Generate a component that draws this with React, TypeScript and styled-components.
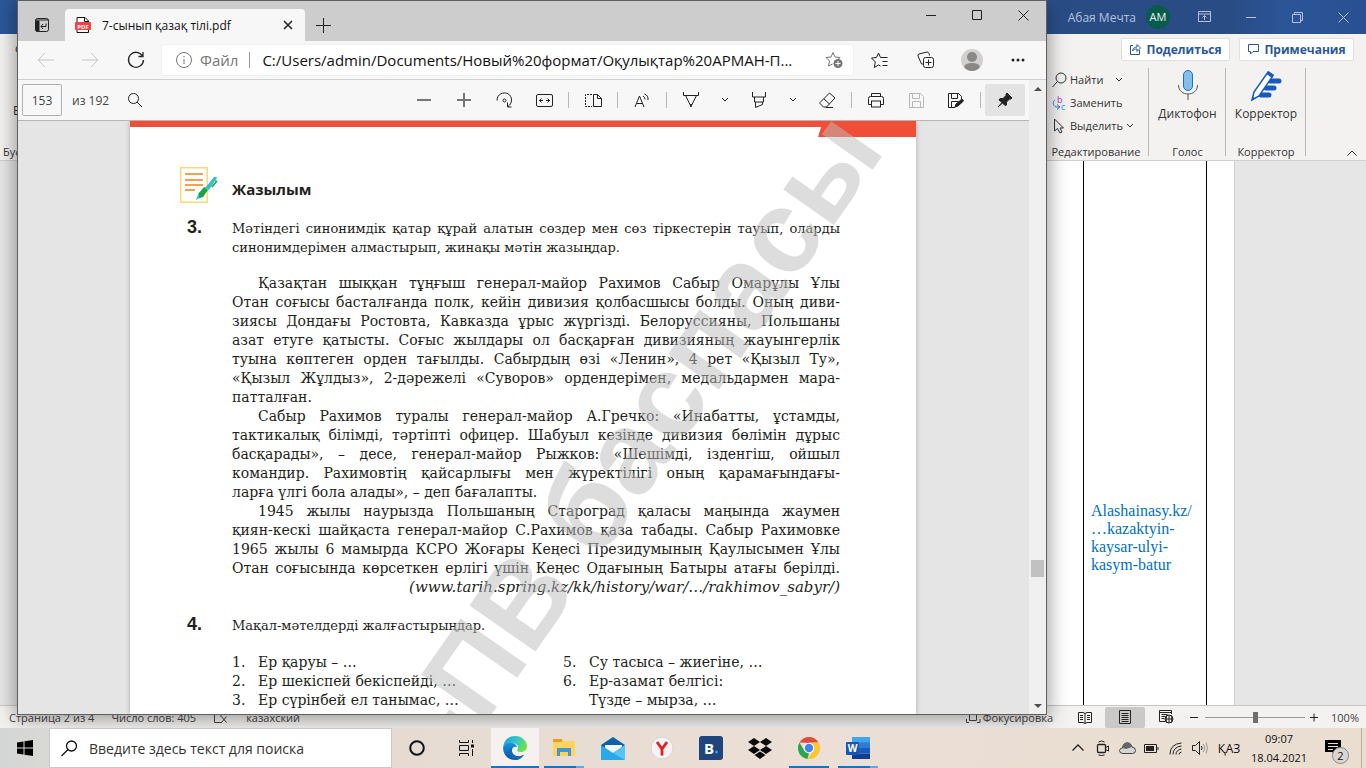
import React from 'react';
import styled, { createGlobalStyle } from 'styled-components';

const ui = '"Open Sans", "Noto Sans", sans-serif';
const serif = '"Liberation Serif", "Times New Roman", serif';
const book = '"DejaVu Serif", serif';

const Global = createGlobalStyle`
  * { box-sizing: border-box; }
  body { margin: 0; font-family: ${ui}; font-size: 12px; color: #333; overflow: hidden; }
  button, input { font: inherit; color: inherit; margin: 0; padding: 0; border: 0; background: none; outline: 0; }
  p, h2, ol { margin: 0; padding: 0; }
  svg { display: block; flex: none; }
`;

const Desktop = styled.div`
  position: relative;
  display: flex;
  flex-direction: column;
  height: 100vh;
  overflow: hidden;
`;

/* ---------- shared ---------- */

const Spacer = styled.div`
  flex: 1;
`;

const IconButton = styled.button<{ $w?: number; $h?: number; $bg?: string; $c?: string }>`
  display: flex;
  flex: none;
  align-items: center;
  justify-content: center;
  width: ${p => p.$w ?? 46}px;
  height: ${p => p.$h ?? 32}px;
  background: ${p => p.$bg ?? 'transparent'};
  color: ${p => p.$c ?? '#222'};
  border-radius: 2px;
`;

type IconProps = { size?: number; w?: number; h?: number; sw?: number; fill?: string; children: React.ReactNode };
const Icon = ({ size = 16, w, h, sw = 1, fill = 'none', children }: IconProps) => (
  <svg width={w ?? size} height={h ?? size} viewBox={`0 0 ${w ?? size} ${h ?? size}`} fill={fill} stroke="currentColor" strokeWidth={sw} aria-hidden="true">
    {children}
  </svg>
);

const Chevron = () => <Icon w={8} h={6}><path d="M1 1l3 3 3-3" /></Icon>;

/* ---------- word window ---------- */

const WordWindow = styled.section`
  display: flex;
  flex: 1;
  flex-direction: column;
  min-height: 0;
`;

const WordTitle = styled.header`
  display: flex;
  flex: none;
  align-items: center;
  justify-content: flex-end;
  height: 34px;
  color: #b4c2dc;
  background: linear-gradient(90deg, #2b579a 0, #2b579a 76%, #294c84 78%, #294c84 90%, #2b5597 94%, #2a5093 100%);
`;

const UserName = styled.span`
  margin-right: 10px;
`;

const Avatar = styled.span`
  width: 24px;
  margin-right: 12px;
  border-radius: 50%;
  background: #085c4c;
  color: #e8f2ef;
  font-size: 11px;
  line-height: 24px;
  text-align: center;
`;

const Ribbon = styled.div`
  display: flex;
  flex: none;
  flex-direction: column;
  height: 127px;
  background: #f3f2f1;
  border-bottom: 1px solid #d2d0ce;
`;

const TabRow = styled.div`
  display: flex;
  flex: none;
  gap: 9px;
  align-items: center;
  height: 30px;
  padding: 0 12px 0 15px;
`;

const ShareButton = styled.button<{ $w: number }>`
  display: flex;
  gap: 4px;
  align-items: center;
  justify-content: center;
  width: ${p => p.$w}px;
  height: 23px;
  background: #fff;
  border: 1px solid #e1dfdd;
  border-radius: 2px;
  color: #2b579a;
  font-weight: 700;
  white-space: nowrap;
`;

const Groups = styled.div`
  display: flex;
  flex: 1;
  padding-top: 4px;
`;

const Group = styled.div<{ $w: number; $pad?: number }>`
  display: flex;
  flex-direction: column;
  align-items: center;
  width: ${p => p.$w}px;
  padding-right: ${p => p.$pad ?? 0}px;
  background: linear-gradient(#b9b7b5, #b9b7b5) right top / 1px 88px no-repeat;
  white-space: nowrap;
`;

const GroupLabel = styled.span`
  margin-top: auto;
  line-height: 16px;
  font-size: 11px;
`;

const CommandList = styled.div`
  display: flex;
  flex-direction: column;
  align-self: flex-start;
  padding-left: 1px;
  font-size: 11px;
`;

const Command = styled.button`
  display: flex;
  gap: 3px;
  align-items: center;
  height: 23px;
`;

const BigCommand = styled.button`
  display: flex;
  flex-direction: column;
  align-items: center;
  gap: 2px;
  line-height: 16px;
`;

const Clipped = styled.div`
  display: flex;
  flex-direction: column;
  justify-content: space-between;
  padding: 34px 0 0 3px;
  line-height: 18px;

  button { padding-left: 10px; text-align: left; }
`;

const Collapse = styled.button`
  align-self: flex-end;
  width: 20px;
  height: 14px;
  margin: 0 4px 0 36px;
  padding-left: 4px;
`;

const Workspace = styled.main`
  display: flex;
  flex: 1;
  min-height: 0;
  justify-content: flex-end;
  padding-right: 131px;
  background: #e6e6e6;
  border-bottom: 1px solid #c8c6c4;
`;

const Sheet = styled.div`
  display: flex;
  width: 794px;
  justify-content: flex-end;
  padding-right: 27px;
  background: #fff;
  border-right: 1px solid #d0cecc;
`;

const Cell = styled.div`
  width: 124px;
  padding: 341px 7px 0;
  border: solid #000;
  border-width: 0 1px;
  color: #0070c0;
  font: 16px/18px ${serif};
  white-space: nowrap;
`;

const StatusBar = styled.footer`
  display: flex;
  flex: none;
  align-items: center;
  height: 22px;
  padding: 0 7px 0 9px;
  background: #f3f2f1;
  color: #444;
  font-size: 11px;
  white-space: nowrap;
`;

const StatusItem = styled.span<{ $gap?: number; $before?: number }>`
  margin-left: ${p => p.$before ?? 0}px;
  margin-right: ${p => p.$gap ?? 17}px;
`;

const Zoom = styled.input`
  appearance: none;
  width: 100px;
  height: 14px;
  margin: 0 4px;
  background: linear-gradient(#999, #999) center / 100% 1px no-repeat;

  &::-webkit-slider-thumb {
    appearance: none;
    width: 5px;
    height: 11px;
    background: #6e6e6e;
  }
`;

const ribbonDisplay = <Icon w={14} h={12}><path d="M.5.5h12v10H.5zM.5 3h12M6.5 9V5M4.500 6.500l2-2 2 2" /></Icon>;
const minimize = <Icon w={11} h={11}><path d="M0 5.500h10" /></Icon>;
const closeIcon = <Icon w={11} h={11}><path d="M.5.5l10 10M10.500.5l-10 10" /></Icon>;

const Word = () => (
  <WordWindow>
    <WordTitle>
      <UserName>Абая Мечта</UserName>
      <Avatar>АМ</Avatar>
      <IconButton $c="#b4c2dc" aria-label="Лента">{ribbonDisplay}</IconButton>
      <IconButton $c="#b4c2dc" aria-label="Свернуть">{minimize}</IconButton>
      <IconButton $c="#b4c2dc" aria-label="Восстановить">
        <Icon w={11} h={11}><path d="M.5 2.500h8v8h-8zM2.500 2.500v-2h8v8h-2" /></Icon>
      </IconButton>
      <IconButton $c="#b4c2dc" aria-label="Закрыть">{closeIcon}</IconButton>
    </WordTitle>
    <Ribbon>
      <TabRow>
        <button>Файл</button>
        <Spacer />
        <ShareButton $w={109}>
          <Icon w={13} h={12}><path d="M4 2.500H1.500v9h9V7M3.500 8C4 5.500 5.500 4 8 4V1.500L11.500 5 8 8.500V6C6 6 4.500 6.500 3.500 8z" /></Icon>
          Поделиться
        </ShareButton>
        <ShareButton $w={115}>
          <Icon w={13} h={12}><path d="M1.500 1.500h10v7H6l-2.500 2.500V8.500h-2z" /></Icon>
          Примечания
        </ShareButton>
      </TabRow>
      <Groups>
        <Clipped>
          <button>Вставить</button>
          <GroupLabel>Буфер обмена</GroupLabel>
        </Clipped>
        <Spacer />
        <Group $w={98} $pad={8}>
          <CommandList>
            <Command>
              <Icon w={15} h={16}><circle cx="9" cy="6" r="5" /><path d="M5 10l-4.500 5" /></Icon>
              Найти <Icon w={20} h={6}><path d="M10 1l3 3 3-3" /></Icon>
            </Command>
            <Command>
              <svg width="15" height="20" viewBox="0 0 15 20" fill="none">
                <path d="M3 7C.5 8.500.5 12.500 4 14h3M5 11.500l3 2.500-3 2.500" stroke="#2b7cc4" />
                <text x="5" y="10" fontSize="9" fill="#a33ea8">b</text>
                <text x="9" y="17" fontSize="9" fill="#2b9bd4">c</text>
              </svg>
              Заменить
            </Command>
            <Command>
              <Icon w={15} h={16}><path d="M2.500 1v12l3-2.500L8 15l2-1-2-4h3.500z" /></Icon>
              Выделить <Chevron />
            </Command>
          </CommandList>
          <GroupLabel>Редактирование</GroupLabel>
        </Group>
        <Group $w={77}>
          <BigCommand>
            <svg width="32" height="36" viewBox="0 0 32 36" fill="none">
              <rect x="11.500" y="2.500" width="9" height="20" rx="4.500" fill="#83beec" stroke="#1e73b8" />
              <path d="M6.500 17c0 12 19 12 19 0M16 26v6" stroke="#555" />
            </svg>
            Диктофон
          </BigCommand>
          <GroupLabel>Голос</GroupLabel>
        </Group>
        <Group $w={80}>
          <BigCommand>
            <svg width="32" height="36" viewBox="0 0 32 36" fill="none">
              <path d="M20 13h9M16 20h8M11 27h8" stroke="#185abd" strokeWidth="5" strokeLinecap="round" />
              <path d="M2 32l2-8L18 4l5 3.500L9 28z" fill="#fff" stroke="#185abd" strokeWidth="1.500" />
              <path d="M16.500 6L18.500 3l5.500 4-2 3zM1.500 32.500l1-4 3 2z" fill="#185abd" />
            </svg>
            Корректор
          </BigCommand>
          <GroupLabel>Корректор</GroupLabel>
        </Group>
        <Collapse aria-label="Свернуть ленту"><Icon w={12} h={8}><path d="M1.500 6.500l4.500-4.500 4.500 4.500" /></Icon></Collapse>
      </Groups>
    </Ribbon>
    <Workspace>
      <Sheet>
        <Cell>Alashainasy.kz/<br />…kazaktyin-<br />kaysar-ulyi-<br />kasym-batur</Cell>
      </Sheet>
    </Workspace>
    <StatusBar>
      <StatusItem>Страница 2 из 4</StatusItem>
      <StatusItem>Число слов: 405</StatusItem>
      <StatusItem><Icon w={16} h={14}><path d="M9 12.500H1.500V1H8v6M8.500 6.500l5 6M13.500 6.500l-5 6" /></Icon></StatusItem>
      <StatusItem>казахский</StatusItem>
      <Spacer />
      <Icon w={15} h={14}><path d="M3.500 1.500h5l2 2v7h-7zM.5 9v3.500H3M14 9v3.500h-3" /></Icon>
      <StatusItem $before={2} $gap={12}>Фокусировка</StatusItem>
      <IconButton $w={40} $h={21} aria-label="Режим чтения">
        <Icon w={14} h={13}><path d="M.5 1.500h4.500l2 1 2-1h4.500v10H9l-2 1-2-1H.5zM7 2.500v10M2 4.500h3M2 6.500h3M2 8.500h3M9 4.500h3M9 6.500h3M9 8.500h3" /></Icon>
      </IconButton>
      <IconButton $w={40} $h={21} $bg="#cbc9c8" aria-label="Разметка страницы">
        <Icon w={12} h={14}><path d="M.5.5h11v13H.5zM2.500 3.500h7M2.500 5.500h7M2.500 7.500h7M2.500 9.500h7M2.500 11.500h7" /></Icon>
      </IconButton>
      <IconButton $w={42} $h={21} aria-label="Веб-документ">
        <Icon w={15} h={14}><path d="M6 11.500H.5V.5h12V4M.5 2.500h12M2.500 4.500h6M2.500 6.500h4M2.500 8.500h3" /><circle cx="10" cy="9" r="4" /><path d="M6 9h8M10 5v8M8 5.500c-1 2-1 5 0 7M12 5.500c1 2 1 5 0 7" /></Icon>
      </IconButton>
      <IconButton $w={14} $h={20} aria-label="Уменьшить"><Icon w={9} h={9}><path d="M0 4.500h8" /></Icon></IconButton>
      <Zoom type="range" aria-label="Масштаб" defaultValue={50} />
      <IconButton $w={10} $h={20} aria-label="Увеличить"><Icon w={9} h={9}><path d="M0 4.500h8M4 .5v8" /></Icon></IconButton>
      <StatusItem $before={12} $gap={0}>100%</StatusItem>
    </StatusBar>
  </WordWindow>
);

/* ---------- browser window ---------- */

const Browser = styled.section`
  position: absolute;
  inset: 0 319px 53px 17px;
  display: flex;
  flex-direction: column;
  overflow: hidden;
  background: #f7f7f7;
  border: 1px solid #5f5f5f;
`;

const BrowserShadow = styled.div`
  position: absolute;
  inset: 0 319px 53px 17px;
  box-shadow: 0 2px 18px 2px rgba(0, 0, 0, 0.38);
`;

const TabStrip = styled.div`
  display: flex;
  flex: none;
  align-items: flex-end;
  height: 40px;
  background: #cdcdcd;
`;

const Tab = styled.div`
  display: flex;
  align-items: center;
  width: 240px;
  height: 32px;
  padding: 0 6px 0 10px;
  background: #f7f7f7;
  border-radius: 4px 4px 0 0;
  color: #111;
  white-space: nowrap;

  span { flex: 1; margin-left: 11px; }
`;

const WindowControls = styled.div`
  display: flex;
  align-self: flex-start;
`;

const AddressRow = styled.div`
  display: flex;
  flex: none;
  align-items: center;
  height: 39px;
  padding: 0 5px;
  border-bottom: 1px solid #cfcfcf;
`;

const Address = styled.div`
  display: flex;
  flex: 1;
  align-items: center;
  height: 30px;
  margin: 0 4px 0 4px;
  padding: 0 9px 0 14px;
  background: #fff;
  border-radius: 3px;
  color: #767676;
  font-size: 15px;
  box-shadow: 0 0 2px #ddd;

  label { padding: 0 11px 0 8px; border-right: 1px solid #999; line-height: 16px; }
  input { flex: 1; min-width: 0; padding-left: 12px; color: #111; }
`;

const ViewerRow = styled.div`
  display: flex;
  flex: 1;
  min-height: 0;
`;

const Viewer = styled.div`
  display: flex;
  flex: 1;
  flex-direction: column;
  min-width: 0;
`;

const PdfToolbar = styled.div`
  display: flex;
  flex: none;
  align-items: center;
  height: 41px;
  padding: 0 4px;
  border-bottom: 1px solid #b5b5b5;
  color: #444;
  white-space: nowrap;
`;

const PageInput = styled.input`
  width: 40px;
  height: 32px;
  margin-right: 10px;
  border: 1px solid #b0b0b0;
  border-radius: 2px;
  text-align: center;
`;

const Divider = styled.span`
  width: 1px;
  height: 16px;
  margin: 0 4px;
  background: #b8b8b8;
`;

const Canvas = styled.div`
  display: flex;
  flex: 1;
  justify-content: center;
  min-height: 0;
  padding-right: 1px;
  overflow: hidden;
  background: #e5e5e5;
`;

const Scrollbar = styled.div`
  display: flex;
  flex-direction: column;
  align-items: center;
  width: 17px;
  padding: 7px 0 6px;
  background: #f0f0f0;
  color: #505050;

  i { width: 13px; height: 17px; margin-bottom: 127px; background: #c1c1c1; }
`;

const Page = styled.article`
  position: relative;
  width: 786px;
  height: max-content;
  min-height: 100%;
  padding: 46px 76px 0 50px;
  overflow: hidden;
  background: linear-gradient(#f04e37, #f04e37) top / 100% 6px no-repeat #fff;
  color: #231f20;
  box-shadow: 0 0 5px rgba(0, 0, 0, 0.25);
`;

const Corner = styled.div`
  position: absolute;
  top: 0;
  right: 0;
  width: 98px;
  height: 16px;
  background: #f04e37;
  clip-path: polygon(5px 0, 100% 0, 100% 100%, 0 100%);
`;

const Watermark = styled.div`
  position: absolute;
  top: -70px;
  right: 29px;
  color: rgba(188, 188, 188, 0.5);
  font: bold 117px/117px "Liberation Sans", Arial, sans-serif;
  white-space: nowrap;
  transform: rotate(-55deg);
  transform-origin: 100% 99px;
  pointer-events: none;
`;

const Heading = styled.div`
  display: flex;
  align-items: flex-end;
  gap: 14px;
  margin-bottom: 16px;

  h2 { font-size: 15px; line-height: 28px; }
`;

const Task = styled.div`
  display: flex;
  margin-bottom: 17px;
  padding-left: 7px;
  font: 13px/19px ${book};

  b { width: 45px; font: bold 18px/16px "Liberation Sans Narrow", "Liberation Sans", sans-serif; }
  p { flex: 1; }
`;

const Line = styled.span<{ $a?: 'justify' | 'left' | 'right'; $indent?: boolean }>`
  display: block;
  padding-left: ${p => (p.$indent ? 26 : 0)}px;
  text-align: justify;
  text-align-last: ${p => p.$a ?? 'justify'};
  white-space: nowrap;
`;

const Story = styled.div`
  margin: 0 0 19px 52px;
  font: 14px/19px ${book};
`;

const Source = styled.p`
  font-size: 15px;
  font-style: italic;
  text-align: right;
`;

const Proverbs = styled.div`
  display: flex;
  padding: 1px 0 0 52px;
  font: 14px/19px ${book};

  ol { flex: none; width: 331px; list-style: none; }
  li { display: flex; }
  li > span:first-child { width: 26px; }
`;

type L = { t: string; a?: 'justify' | 'left' | 'right'; i?: boolean };
const story: L[][] = [
  [
    { t: 'Қазақтан шыққан тұңғыш генерал-майор Рахимов Сабыр Омарұлы Ұлы', i: true },
    { t: 'Отан соғысы басталғанда полк, кейін дивизия қолбасшысы болды. Оның диви-' },
    { t: 'зиясы Дондағы Ростовта, Кавказда ұрыс жүргізді. Белоруссияны, Польшаны' },
    { t: 'азат етуге қатысты. Соғыс жылдары ол басқарған дивизияның жауынгерлік' },
    { t: 'туына көптеген орден тағылды. Сабырдың өзі «Ленин», 4 рет «Қызыл Ту»,' },
    { t: '«Қызыл Жұлдыз», 2-дәрежелі «Суворов» ордендерімен, медальдармен мара-' },
    { t: 'патталған.', a: 'left' },
  ],
  [
    { t: 'Сабыр Рахимов туралы генерал-майор А.Гречко: «Инабатты, ұстамды,', i: true },
    { t: 'тактикалық білімді, тәртіпті офицер. Шабуыл кезінде дивизия бөлімін дұрыс' },
    { t: 'басқарады», – десе, генерал-майор Рыжков: «Шешімді, ізденгіш, ойшыл' },
    { t: 'командир. Рахимовтің қайсарлығы мен жүректілігі оның қарамағындағы-' },
    { t: 'ларға үлгі бола алады», – деп бағалапты.', a: 'left' },
  ],
  [
    { t: '1945 жылы наурызда Польшаның Староград қаласы маңында жаумен', i: true },
    { t: 'қиян-кескі шайқаста генерал-майор С.Рахимов қаза табады. Сабыр Рахимовке' },
    { t: '1965 жылы 6 мамырда КСРО Жоғары Кеңесі Президумының Қаулысымен Ұлы' },
    { t: 'Отан соғысында көрсеткен ерлігі үшін Кеңес Одағының Батыры атағы берілді.' },
  ],
];

const Document = () => (
  <Page>
    <Corner />
    <Heading>
      <svg width="38" height="36" viewBox="0 0 38 36" fill="none">
        <rect x=".75" y=".75" width="26.500" height="34.500" stroke="#ffd871" strokeWidth="1.500" />
        <path d="M5 7h18M5 13h18M5 18h18M5 23h10" stroke="#f4a050" strokeWidth="2" />
        <path d="M16 33l3-8 5 4z" fill="#35bfc9" />
        <path d="M19 26l5-6 4 3-5 7-4 1z" fill="#1fa14b" />
        <path d="M25 21L34 10q2-1 3 1L29 23z" fill="#35bfc9" />
        <path d="M32 20l4.500-5.500-1-1" stroke="#1fa14b" strokeWidth="1.500" />
      </svg>
      <h2>Жазылым</h2>
    </Heading>
    <Task>
      <b>3.</b>
      <p>
        <Line>Мәтіндегі синонимдік қатар құрай алатын сөздер мен сөз тіркестерін тауып, оларды</Line>
        <Line $a="left">синонимдерімен алмастырып, жинақы мәтін жазыңдар.</Line>
      </p>
    </Task>
    <Story>
      {story.map((lines, i) => (
        <p key={i}>
          {lines.map(l => <Line key={l.t} $a={l.a} $indent={l.i}>{l.t}</Line>)}
        </p>
      ))}
      <Source>(www.tarih.spring.kz/kk/history/war/…/rakhimov_sabyr/)</Source>
    </Story>
    <Task>
      <b>4.</b>
      <p>Мақал-мәтелдерді жалғастырыңдар.</p>
    </Task>
    <Proverbs>
      <ol>
        <li><span>1.</span><span>Ер қаруы – …</span></li>
        <li><span>2.</span><span>Ер шекіспей бекіспейді, …</span></li>
        <li><span>3.</span><span>Ер сүрінбей ел танымас, …</span></li>
      </ol>
      <ol>
        <li><span>5.</span><span>Су тасыса – жиегіне, …</span></li>
        <li><span>6.</span><span>Ер-азамат белгісі:<br />Түзде – мырза, …</span></li>
      </ol>
    </Proverbs>
    <Watermark aria-hidden="true">АРМАН-ПВ баспасы</Watermark>
  </Page>
);

const Edge = () => (
  <Browser>
    <TabStrip>
      <IconButton $w={47} aria-label="Вкладки">
        <Icon><rect x="1.500" y="1.500" width="13" height="13" rx="2" /><path d="M1.500 3h13M2 4h3v10H2z" fill="currentColor" /><path d="M12 6.500v3H7M9 7L7 9.500 9 12" /></Icon>
      </IconButton>
      <Tab>
        <svg width="16" height="16" viewBox="0 0 16 16">
          <path d="M2 .5h8l3.500 3.500v11.500H2z" fill="#fff" stroke="#111" />
          <path d="M9.500.5v4h4" fill="none" stroke="#111" />
          <rect x="0" y="5" width="16" height="8" rx="1" fill="#f4403f" />
          <text x="8" y="11.500" fontSize="6" fontWeight="700" fill="#fff" textAnchor="middle">PDF</text>
        </svg>
        <span>7-сынып қазақ тілі.pdf</span>
        <IconButton $w={22} $h={22} aria-label="Закрыть вкладку"><Icon w={10} h={10}><path d="M1 1l8 8M9 1L1 9" strokeWidth="1.500" /></Icon></IconButton>
      </Tab>
      <IconButton $w={36} aria-label="Новая вкладка"><Icon w={15} h={15}><path d="M0 7.500h15M7.500 0v15" /></Icon></IconButton>
      <Spacer />
      <WindowControls>
        <IconButton $h={28} aria-label="Свернуть">{minimize}</IconButton>
        <IconButton $h={28} aria-label="Развернуть"><Icon w={10} h={10}><path d="M.5.5h9v9h-9z" /></Icon></IconButton>
        <IconButton $h={28} aria-label="Закрыть">{closeIcon}</IconButton>
      </WindowControls>
    </TabStrip>
    <AddressRow>
      <IconButton $w={45} $c="#c6c6c6" aria-label="Назад"><Icon w={17} h={14}><path d="M17 7H1M8 0L1 7l7 7" /></Icon></IconButton>
      <IconButton $w={45} $c="#c6c6c6" aria-label="Вперёд"><Icon w={17} h={14}><path d="M0 7h16M9 0l7 7-7 7" /></Icon></IconButton>
      <IconButton $w={45} aria-label="Обновить"><Icon w={18} h={18}><path d="M15.500 5A7.500 7.500 0 1 0 16.500 9M16 1v4.500h-4.500" strokeWidth="1.300" /></Icon></IconButton>
      <Address>
        <Icon><circle cx="8" cy="8" r="7.500" /><path d="M8 7v5M8 4v1.500" /></Icon>
        <label htmlFor="url">Файл</label>
        <input id="url" readOnly value="C:/Users/admin/Documents/Новый%20формат/Оқулықтар%20АРМАН-П..." />
        <Icon w={19} h={18}>
          <path d="M8 1.500l2 4.500 5 .5-3.500 3.500M8 1.500L6 6l-5 .5 3.500 3.500-1 5 4-2" />
          <circle cx="13" cy="12.500" r="4.500" fill="currentColor" stroke="none" />
          <path d="M13 10v5M10.500 12.500h5" stroke="#fff" />
        </Icon>
      </Address>
      <IconButton aria-label="Избранное"><Icon w={18} h={17}><path d="M12 5.500H9.500L7.500 1l-2 4.500-5 .5 3.800 4-1 5.500 4.200-2.500 2 1M10.500 5.500h6M11.500 9.500h5M11.500 13.500h5" /></Icon></IconButton>
      <IconButton aria-label="Коллекции"><Icon w={18} h={18}><path d="M6 13H4.500L1 5q-.5-1.500 1-2l8-2q1.500 0 2 1.500l.5 2" /><rect x="6.500" y="6.500" width="10" height="10" rx="2" /><path d="M11.500 8.500v6M8.500 11.500h6" /></Icon></IconButton>
      <IconButton aria-label="Профиль">
        <svg width="22" height="22" viewBox="0 0 22 22"><circle cx="11" cy="11" r="11" fill="#d2d0ce" /><circle cx="11" cy="8" r="5" fill="#8a8886" /><path d="M3 18q1-4 8-4t8 4q-3 4-8 4t-8-4z" fill="#8a8886" /></svg>
      </IconButton>
      <IconButton aria-label="Ещё"><Icon w={14} h={4} fill="currentColor"><g stroke="none"><circle cx="2" cy="2" r="1.500" /><circle cx="7" cy="2" r="1.500" /><circle cx="12" cy="2" r="1.500" /></g></Icon></IconButton>
    </AddressRow>
    <ViewerRow>
      <Viewer>
        <PdfToolbar>
          <PageInput aria-label="Страница" defaultValue="153" />
          <span>из 192</span>
          <IconButton $w={52} aria-label="Найти"><Icon><circle cx="6.500" cy="6.500" r="5" /><path d="M10 10l5 5" /></Icon></IconButton>
          <Spacer />
          <IconButton $w={40} $c="#777" aria-label="Уменьшить"><Icon w={14} h={14}><path d="M0 7h14" strokeWidth="2" /></Icon></IconButton>
          <IconButton $w={40} $c="#777" aria-label="Увеличить"><Icon w={14} h={14}><path d="M0 7h14M7 0v14" strokeWidth="2" /></Icon></IconButton>
          <IconButton $w={40} aria-label="Повернуть"><Icon w={17} h={17}><path d="M1 8.500C1-1.500 15.500-1.500 15.500 8c0 3-1.500 5-3.500 6.500M11.500 10.500v4.500h4" /><circle cx="8.500" cy="8.500" r="1.500" /></Icon></IconButton>
          <IconButton $w={40} aria-label="По ширине"><Icon w={17} h={13}><rect x=".5" y=".5" width="16" height="12" rx="1.500" /><path d="M3 6.500h4M10 6.500h4M5.500 4.500L3.500 6.500l2 2M11.500 4.500l2 2-2 2" /></Icon></IconButton>
          <Divider />
          <IconButton $w={40} aria-label="Вид страницы"><Icon w={17} h={13}><path d="M8.500.5h4l4 4v8h-8zM12.500.5v4h4" /><path d="M7 .5H.5v12H7" strokeDasharray="2 1" /></Icon></IconButton>
          <Divider />
          <IconButton $w={40} aria-label="Прочесть вслух"><Icon w={16} h={15}><path d="M1 14L5.500 3 10 14M2.500 10.500h6M9 3q2 1 2 3.500M10.500 1q4 1.500 3.500 6" /></Icon></IconButton>
          <Divider />
          <IconButton $w={40} aria-label="Рисование"><Icon w={16} h={16}><path d="M.5 0v3.500h15V0M2.500 3.500l4.500 9h2l4.500-9M7 12.500l1 2.500 1-2.500" /></Icon></IconButton>
          <IconButton $w={28} aria-label="Параметры рисования"><Chevron /></IconButton>
          <IconButton $w={40} aria-label="Выделение"><Icon w={16} h={16}><path d="M1.500 0v5h13V0M3.500 5v5h9V5M4.500 10v5.500l7-3V10" /></Icon></IconButton>
          <IconButton $w={28} aria-label="Параметры выделения"><Chevron /></IconButton>
          <IconButton $w={40} aria-label="Ластик"><Icon w={17} h={16}><path d="M1 10.500L10.500 1l5.500 5-8.500 9H4.500L1 11.500zM5 7l5.500 5M7 15.500h7" /></Icon></IconButton>
          <Divider />
          <IconButton $w={40} aria-label="Печать"><Icon w={17} h={15}><path d="M3.500 3.500v-3h9v3M3.500 11.500h-3v-6q0-2 2-2h11q2 0 2 2v6h-3" /><rect x="3.500" y="8" width="9" height="6" /></Icon></IconButton>
          <IconButton $w={40} $c="#b8b8b8" aria-label="Сохранить"><Icon w={15} h={15}><path d="M.5.5h11l3 3v11H.5zM3.500.5v5h7v-5M3.500 14.500v-6h8v6" /></Icon></IconButton>
          <IconButton $w={40} aria-label="Сохранить как"><Icon w={16} h={15}><path d="M7 14.500H.5V.5h10l3 3V6M3.500.5v5h6v-5M3.500 14.500v-6h7" /><path d="M7 14l1-3 6-5 1.500 2-5.500 5z" fill="currentColor" /></Icon></IconButton>
          <Divider />
          <IconButton $w={40} $bg="#e3e3e3" aria-label="Закрепить"><Icon fill="currentColor"><path d="M10 1l5 5-1 1h-1.500L9.500 10v3L8 13.500 5.500 11 1 15l4-4.500L2 8l1-1.500h3l3-3V2z" /></Icon></IconButton>
        </PdfToolbar>
        <Canvas><Document /></Canvas>
      </Viewer>
      <Scrollbar>
        <Icon w={8} h={4} fill="currentColor"><path d="M0 4l4-4 4 4z" stroke="none" /></Icon>
        <Spacer />
        <i />
        <Icon w={8} h={4} fill="currentColor"><path d="M0 0l4 4 4-4z" stroke="none" /></Icon>
      </Scrollbar>
    </ViewerRow>
  </Browser>
);

/* ---------- taskbar ---------- */

const Taskbar = styled.footer`
  position: relative;
  display: flex;
  flex: none;
  align-items: center;
  height: 40px;
  color: #111;
  background: linear-gradient(90deg, #d3d6d5 0, #dad9d5 4%, #e6dbd2 30%, #ebdfd6 60%, #e9ded0 100%);
`;

const SearchBox = styled.label`
  display: flex;
  align-items: center;
  gap: 11px;
  width: 343px;
  height: 40px;
  margin-right: 1px;
  padding-left: 11px;
  background: #fff;
  border: 1px solid #c9c9c9;

  input { flex: 1; font-size: 14px; }
  input::placeholder { color: #333; opacity: 1; }
`;

const AppButton = styled.button<{ $active?: boolean; $bar?: 'full' | 'split' | 'short' }>`
  position: relative;
  display: flex;
  align-items: center;
  justify-content: center;
  width: 48px;
  height: 40px;
  margin-right: 1px;
  background: ${p => (p.$active ? '#f6f1ee' : 'transparent')};

  &::after {
    content: "";
    position: absolute;
    bottom: 0;
    left: ${p => (p.$bar === 'full' ? 0 : 4)}px;
    right: ${p => (p.$bar === 'full' ? 0 : 4)}px;
    height: ${p => (p.$bar ? 2 : 0)}px;
    background: ${p => (p.$bar === 'split' ? 'linear-gradient(90deg, #0078d7 80%, #5ea9e6 80%)' : '#0078d7')};
  }
`;

const Tray = styled.div`
  display: flex;
  align-items: center;
  height: 40px;
  padding-right: 4px;
`;

const Language = styled.button`
  width: 34px;
  text-align: center;
`;

const Clock = styled.time`
  width: 66px;
  font-size: 11px;
  line-height: 19px;
  text-align: center;
`;

const Notifications = styled.button`
  position: relative;
  width: 49px;
  height: 40px;
  padding: 0 0 0 13px;

  span {
    position: absolute;
    top: 19px;
    left: 20px;
    width: 17px;
    border: 1px solid #888;
    border-radius: 50%;
    background: #d9d6d2;
    font-size: 11px;
    line-height: 15px;
  }
`;

const DesktopEdge = styled.span`
  width: 1px;
  height: 40px;
  background: #b5aea8;
`;

const Bar = () => (
  <Taskbar>
    <IconButton $w={49} $h={40} $c="#000" aria-label="Пуск">
      <Icon fill="currentColor"><path stroke="none" d="M0 2.500L6.500 1.500v6H0zM7.500 1.300L16 0v7.500H7.500zM0 8.500h6.500v6L0 13.500zM7.500 8.500H16V16l-8.500-1.200z" /></Icon>
    </IconButton>
    <SearchBox>
      <Icon w={17} h={17}><circle cx="10.500" cy="6" r="5" strokeWidth="1.300" /><path d="M7 9.500L.5 16" strokeWidth="1.300" /></Icon>
      <input type="search" placeholder="Введите здесь текст для поиска" />
    </SearchBox>
    <AppButton aria-label="Кортана"><Icon><circle cx="8" cy="8" r="6.800" strokeWidth="2" /></Icon></AppButton>
    <AppButton aria-label="Представление задач"><Icon w={17} h={16}><path d="M1.500 0v2.500h9V0M1.500 5.500h9v5h-9zM1.500 16v-2.500h9V16M14.500 0v3M14.500 9v7" /><path d="M13 4.500h3v3h-3z" fill="currentColor" stroke="none" /></Icon></AppButton>
    <AppButton $active $bar="full" aria-label="Edge">
      <svg width="24" height="24" viewBox="0 0 24 24">
        <defs>
          <linearGradient id="eg" x1="0" y1="0" x2="1" y2=".4"><stop offset="0" stopColor="#1b9de2" /><stop offset=".6" stopColor="#35c8c4" /><stop offset="1" stopColor="#6be14e" /></linearGradient>
          <linearGradient id="eb" x1="0" y1="0" x2="0" y2="1"><stop offset="0" stopColor="#1795df" /><stop offset="1" stopColor="#0b4fa3" /></linearGradient>
        </defs>
        <path d="M.2 11C1 4 6 0 12 0c7 0 12 5 12 10 0 4-3 6-6.500 6-3 0-4-1.500-3-2.500 1.500-2 .5-6-4.500-6C6 7.500 2 8 .2 11z" fill="url(#eg)" />
        <path d="M.2 11C1.500 8 5 6.500 9 7c2.500.3 4.500 2 5 4-3-1-5.500 1-5 4.500.5 4 6 7 12 3C18 23 14.500 24 12 24 5 24-.5 18 .2 11z" fill="url(#eb)" />
        <path d="M9 11c-4 3-3.500 10 3 13 3.500 0 7-2 9-5-5 2.500-11 1-12-3z" fill="#1668b8" />
      </svg>
    </AppButton>
    <AppButton $bar="split" aria-label="Проводник">
      <svg width="22" height="20" viewBox="0 0 22 20"><path d="M0 1h9l2 2h11v15H0z" fill="#ffd35c" /><path d="M0 1h9v3H0z" fill="#e0a21b" /><path d="M4 18v-8h14v8h-3v-4H7v4z" fill="#3f96d8" /></svg>
    </AppButton>
    <AppButton aria-label="Почта">
      <svg width="24" height="23" viewBox="0 0 24 23"><path d="M0 8l12-8 12 8v4H0z" fill="#0a62ac" /><path d="M4 8h17v8H4z" fill="#f5f7f9" /><path d="M0 8l12 8 12-8v15H0z" fill="#29a9ea" /><path d="M12 16l12-8v15z" fill="#54c5f5" /></svg>
    </AppButton>
    <AppButton aria-label="Яндекс">
      <svg width="24" height="24" viewBox="0 0 24 24"><circle cx="12" cy="12" r="11" fill="#f4f4f4" stroke="#d8d3cf" /><path d="M7 6l5 7 5-7M12 12v7.500" fill="none" stroke="#e01e26" strokeWidth="2.800" /></svg>
    </AppButton>
    <AppButton aria-label="Booking">
      <svg width="24" height="24" viewBox="0 0 24 24"><path d="M3 0h18q3 0 3 3v18q0 3-3 3H0V3q0-3 3-3z" fill="#20447c" /><text x="5" y="17.500" fontSize="15" fontWeight="700" fill="#fff">B</text><circle cx="17.500" cy="16" r="1.500" fill="#1fa8e8" /></svg>
    </AppButton>
    <AppButton aria-label="Dropbox">
      <svg width="24" height="21" viewBox="0 0 24 21"><path d="M6 0l6 4-6 4-6-4zM18 0l6 4-6 4-6-4zM6 8l6 4-6 4-6-4zM18 8l6 4-6 4-6-4zM12 13.500l5.500 3.500-5.500 4-5.500-4z" fill="#0a0a0a" /></svg>
    </AppButton>
    <AppButton $bar="short" aria-label="Chrome">
      <svg width="22" height="22" viewBox="0 0 22 22"><path d="M1.500 5.500a11 11 0 0 1 19 0L11 6z" fill="#e04a3f" /><path d="M1.500 5.500L6.500 14 11 16.500 9.500 22A11 11 0 0 1 1.500 5.500z" fill="#2da44e" /><path d="M20.500 5.500A11 11 0 0 1 9.500 22l6-8.500L11 5.500z" fill="#fbc62e" /><circle cx="11" cy="11" r="5.300" fill="#fff" /><circle cx="11" cy="11" r="4.200" fill="#4583ec" /></svg>
    </AppButton>
    <AppButton $bar="split" aria-label="Word">
      <svg width="24" height="22" viewBox="0 0 24 22"><path d="M6 0h18v6H6z" fill="#41a5ee" /><path d="M6 5.500h18V11H6z" fill="#2b7cd3" /><path d="M6 11h18v5.500H6z" fill="#185abd" /><path d="M6 16.500h18V22H6z" fill="#103f91" /><rect y="5" width="13" height="13" rx="1" fill="#1b55b3" /><text x="6.500" y="15" fontSize="10" fontWeight="700" fill="#fff" textAnchor="middle">W</text></svg>
    </AppButton>
    <Spacer />
    <Tray>
      <IconButton $w={24} aria-label="Скрытые значки"><Icon w={12} h={8}><path d="M.5 6.500L6 1l5.500 5.500" strokeWidth="1.300" /></Icon></IconButton>
      <IconButton $w={25} aria-label="Собрание"><Icon w={14} h={16}><rect x="1.500" y="4.500" width="8" height="8" rx="1" strokeWidth="1.300" /><path d="M9.500 7.500l3-1.500v5l-3-1.500M2.500 2q3-2 6 0M2.500 15q3 1 6 0" /></Icon></IconButton>
      <IconButton $w={24} aria-label="OneDrive"><svg width="17" height="12" viewBox="0 0 17 12"><path d="M4 11.500q-3.500 0-3.500-3Q1 6 3.500 6 4 1 8 .8q4 0 5 4.200 3.500.5 3.500 3.500t-3 3z" fill="#d5d5d5" stroke="#444" /><path d="M3.500 6Q4 1 8 .8q4 0 5 4.200L7 7z" fill="#666" /></svg></IconButton>
      <IconButton $w={24} aria-label="Батарея"><Icon w={15} h={9}><path d="M.5.5h12v8H.5zM14 3v3" /><path d="M2 2h8v5H2z" fill="currentColor" stroke="none" /></Icon></IconButton>
      <IconButton $w={25} aria-label="Сеть"><Icon w={14} h={13}><path d="M1 12.500Q1 2 12.500 1M4 12.500Q4 5 12.500 4M7 12.500Q7 8 12.500 7M10 12.500q0-2 2.500-2.500" /></Icon></IconButton>
      <IconButton $w={24} aria-label="Громкость"><Icon w={17} h={14}><path d="M.5 4.500h3l4-4v13l-4-4h-3zM9.500 5q1 2 0 4" /><path d="M11.500 3q2.500 4 0 8M14 1.500q3 5.500 0 11" stroke="#999" /></Icon></IconButton>
      <Language>ҚАЗ</Language>
      <Clock>09:07<br />18.04.2021</Clock>
      <Notifications aria-label="Уведомления">
        <Icon w={16} h={16} fill="#000"><path d="M0 0h16v12h-5v4l-4-4H0z" stroke="none" /><path d="M3 3.500h10M3 6.500h10M3 9.500h5" stroke="#e9ded0" /></Icon>
        <span>2</span>
      </Notifications>
      <DesktopEdge />
    </Tray>
  </Taskbar>
);

export default function App() {
  return (
    <Desktop>
      <Global />
      <Word />
      <BrowserShadow />
      <Edge />
      <Bar />
    </Desktop>
  );
}
